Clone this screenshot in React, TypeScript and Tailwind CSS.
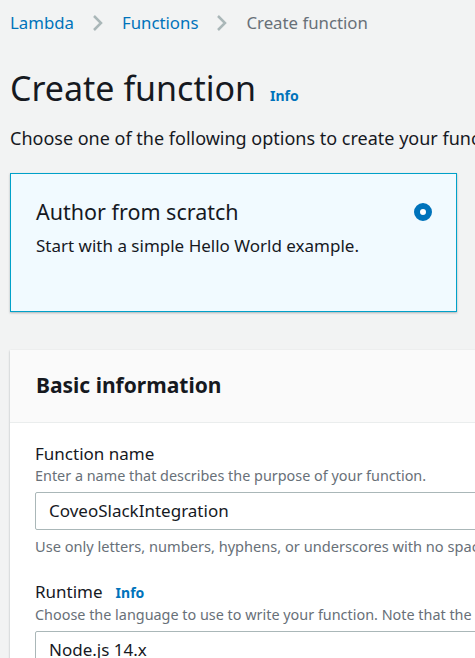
const Chevron = () => (
  <svg width="12" height="18" viewBox="0 0 12 18" className="mx-[18px]">
    <path d="M2 2l7 7-7 7" fill="none" stroke="#aab7b8" strokeWidth="2.5" />
  </svg>
);

const Field = ({
  label,
  info,
  help,
  value,
  hint,
}: {
  label: string;
  info?: boolean;
  help: string;
  value: string;
  hint?: string;
}) => (
  <div className="flex flex-col">
    <div className="flex items-baseline gap-[13px] text-[17px] leading-[22px] text-[#16191f]">
      {label}
      {info && <span className="text-[14px] font-bold text-[#0073bb]">Info</span>}
    </div>
    <div className="whitespace-nowrap text-[14.4px] leading-[22px] text-[#687078]">{help}</div>
    <div className="mt-[5px] flex h-[38px] w-[460px] items-center whitespace-nowrap rounded-[2px] border border-[#aab7b8] bg-white px-[13px] text-[17px] text-[#16191f]">
      {value}
    </div>
    {hint && (
      <div className="mt-[6px] whitespace-nowrap text-[14.6px] leading-[20px] text-[#687078]">{hint}</div>
    )}
  </div>
);

export default function App() {
  return (
    <div
      className="h-[658px] w-[475px] overflow-hidden bg-[#f2f3f3] pl-[10px]"
      style={{ fontFamily: '"Noto Sans", sans-serif' }}
    >
      <nav className="flex h-[46px] items-center whitespace-nowrap text-[16.8px]">
        <span className="text-[#0073bb]">Lambda</span>
        <Chevron />
        <span className="text-[#0073bb]">Functions</span>
        <Chevron />
        <span className="text-[#687078]">Create function</span>
      </nav>
      <div className="mt-[18px] flex items-baseline gap-[14px] whitespace-nowrap">
        <h1 className="text-[34px] leading-[48px] text-[#16191f]">Create function</h1>
        <span className="text-[14px] font-bold text-[#0073bb]">Info</span>
      </div>
      <p className="mt-[14px] whitespace-nowrap text-[18px] leading-[24px] text-[#16191f]">
        Choose one of the following options to create your function.
      </p>
      <div className="mt-[23px] flex h-[139px] w-[447px] items-start justify-between border border-[#00a1c9] bg-[#f1faff] pl-[25px] pr-[24px] pt-[24px] shadow-[0_1px_2px_rgba(0,28,36,0.3)]">
        <div>
          <div className="text-[21.5px] leading-[28px] text-[#16191f]">Author from scratch</div>
          <div className="mt-[9px] text-[17px] leading-[22px] text-[#16191f]">
            Start with a simple Hello World example.
          </div>
        </div>
        <div className="mt-[5px] h-[18px] w-[18px] rounded-full border-[6px] border-[#0073bb] bg-white" />
      </div>
      <section className="mt-[38px] w-[520px] bg-white shadow-[0_1px_2px_rgba(0,28,36,0.3)]">
        <div className="flex h-[73px] items-center border-b border-[#eaeded] bg-[#fafafa] pl-[26px]">
          <h2 className="text-[21px] font-bold text-[#16191f]">Basic information</h2>
        </div>
        <div className="flex flex-col gap-[25px] pl-[25px] pt-[20px]">
          <Field
            label="Function name"
            help="Enter a name that describes the purpose of your function."
            value="CoveoSlackIntegration"
            hint="Use only letters, numbers, hyphens, or underscores with no spaces."
          />
          <Field
            label="Runtime"
            info
            help="Choose the language to use to write your function. Note that the console code editor supports only Node.js, Python, and Ruby."
            value="Node.js 14.x"
          />
        </div>
      </section>
    </div>
  );
}
